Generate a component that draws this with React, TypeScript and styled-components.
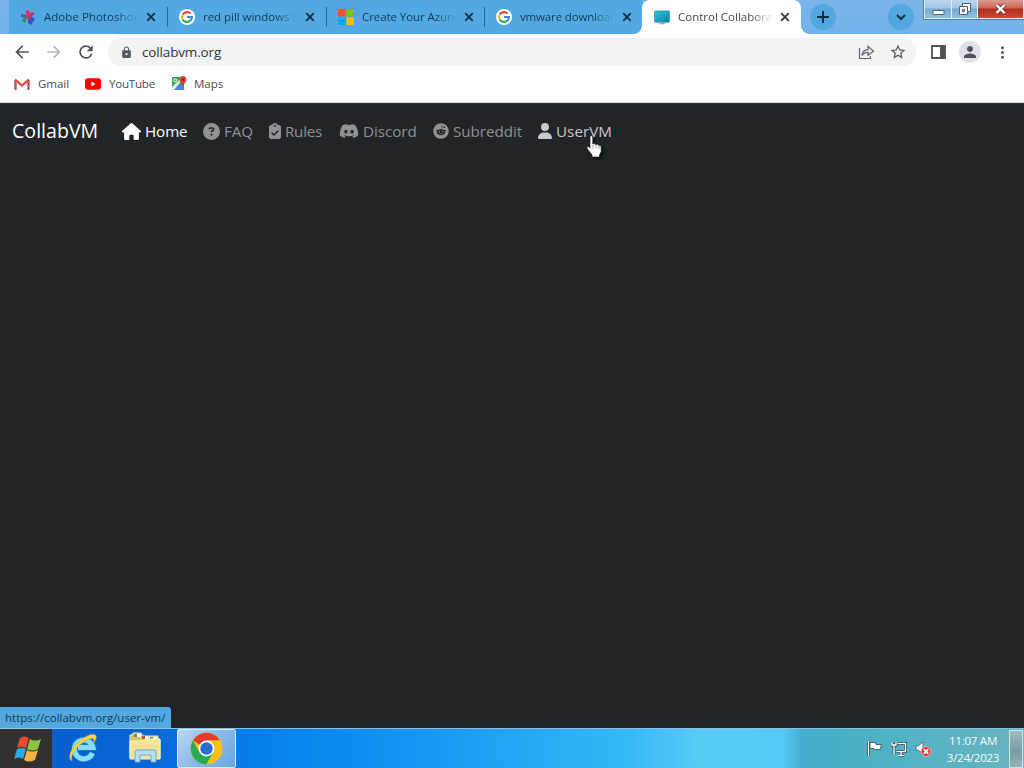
import React from "react";
import styled, { createGlobalStyle, css } from "styled-components";
import { FaHouse, FaCircleQuestion, FaClipboardCheck, FaDiscord, FaUser } from "react-icons/fa6";
import { FaReddit } from "react-icons/fa";
import { MdLock, MdPerson, MdMoreVert, MdStarBorder, MdRefresh, MdArrowBack, MdArrowForward } from "react-icons/md";

const Global = createGlobalStyle`
  * { box-sizing: border-box; }
  html, body { margin: 0; width: 1024px; height: 768px; overflow: hidden; }
  body { font-family: "Open Sans", "Noto Sans", sans-serif; }
  svg { display: block; flex: none; }
`;

const Screen = styled.div`
  width: 1024px;
  height: 768px;
  display: flex;
  flex-direction: column;
  background: #212529;
`;

/* Browser title bar */
const TabStrip = styled.header`
  height: 34px;
  display: flex;
  background: linear-gradient(#7ab4ea, #72b2e6);
  padding-left: 9px;
`;

const Tab = styled.div<{ $width: number; $active?: boolean; $last?: boolean }>`
  position: relative;
  width: ${(p) => p.$width}px;
  height: 34px;
  flex: none;
  display: flex;
  align-items: center;
  padding: 0 0 1px ${(p) => (p.$active ? 12 : 11)}px;
  color: ${(p) => (p.$active ? "#45494d" : "#103653")};
  background: ${(p) => (p.$active ? "#fff" : "#52a9e2")};
  border-radius: ${(p) => (p.$active ? "8px 8px 0 0" : p.$last ? "0 0 8px 0" : "0")};
  ${(p) =>
    p.$active &&
    css`
      &::before, &::after {
        content: "";
        position: absolute;
        bottom: 0;
        width: 8px;
        height: 8px;
      }
      &::before { left: -8px; background: radial-gradient(circle at 0 0, #52a9e2 7.5px, #fff 8px); }
      &::after { right: -8px; background: radial-gradient(circle at 100% 0, #72b2e6 7.5px, #fff 8px); }
    `}
`;

const Separator = styled.i`
  width: 1px;
  height: 20px;
  margin: 7px 0;
  background: #246a9a;
  box-shadow: 0 0 0 7px #52a9e2;
  clip-path: inset(-7px 0);
`;

const TabTitle = styled.span<{ $spacing?: number }>`
  width: 93px;
  margin-left: 8px;
  overflow: hidden;
  white-space: nowrap;
  font-size: 11.5px;
  line-height: 18px;
  letter-spacing: ${(p) => p.$spacing ?? 0}px;
  mask-image: linear-gradient(90deg, #000 72px, transparent 95px);
`;

const TabClose = styled.svg`
  margin-left: 9px;
`;

const RoundButton = styled.span<{ $gap: number }>`
  width: 26px;
  height: 26px;
  margin: 4px 0 0 ${(p) => p.$gap}px;
  border-radius: 50%;
  background: #51a8e0;
  display: flex;
  align-items: center;
  justify-content: center;
`;

const WindowControls = styled.div`
  margin-left: 10px;
  height: 19px;
  display: flex;
  border: 1px solid #e2f0fa;
  border-top: 0;
  outline: 1px solid #547ea3;
`;

const WindowButton = styled.span<{ $width: number; $close?: boolean }>`
  width: ${(p) => p.$width}px;
  display: flex;
  align-items: center;
  justify-content: center;
  border-right: ${(p) => (p.$close ? 0 : "1px solid #e2f0fa")};
  background: ${(p) =>
    p.$close
      ? "linear-gradient(#dc9b8e, #ca6355 45%, #b62b1d 50%, #c94b38)"
      : "linear-gradient(#bed8ef, #9fc4e5 45%, #75a8d2 50%, #91bfe3)"};
`;

/* Address bar and bookmarks */
const Toolbar = styled.div`
  height: 37px;
  display: flex;
  align-items: center;
  padding: 0 0 1px 12px;
  background: #fff;
  color: #55585c;
`;

const NavButton = styled.span<{ $dim?: boolean }>`
  width: 20px;
  margin-right: 12px;
  color: ${(p) => (p.$dim ? "#b5b7ba" : "#505357")};
`;

const Omnibox = styled.div`
  width: 808px;
  height: 28px;
  display: flex;
  align-items: center;
  border-radius: 14px;
  background: #f1f3f4;
  padding: 0 9px 0 12px;
`;

const Address = styled.span`
  flex: 1;
  margin-left: 9px;
  font-size: 13.5px;
  line-height: 20px;
  letter-spacing: -0.15px;
  color: #303336;
`;

const Share = styled.svg`
  margin-right: 14px;
`;

const SidePanel = styled.svg`
  margin-left: 15px;
`;

const Avatar = styled.span`
  width: 22px;
  height: 22px;
  margin: 0 12px 0 13px;
  border-radius: 50%;
  background: #dee1e8;
  color: #4a515b;
  display: flex;
  align-items: center;
  justify-content: center;
`;

const Bookmarks = styled.div`
  height: 32px;
  display: flex;
  align-items: center;
  padding: 0 0 6px 14px;
  background: #fff;
  border-bottom: 1px solid #dedfe0;
`;

const Bookmark = styled.span<{ $width: number; $gap: number; $spacing: number }>`
  width: ${(p) => p.$width}px;
  display: flex;
  align-items: center;
  gap: ${(p) => p.$gap}px;
  font-size: 11.6px;
  line-height: 18px;
  letter-spacing: ${(p) => p.$spacing}px;
  color: #4b4e52;
`;

/* Page */
const Page = styled.main`
  position: relative;
  flex: 1;
  border-top: 1px solid #302c34;
`;

const Navbar = styled.nav`
  height: 56px;
  display: flex;
  align-items: center;
  padding: 0 0 2px 12px;
`;

const Brand = styled.span`
  width: 110px;
  font-size: 19.6px;
  line-height: 28px;
  letter-spacing: 0;
  color: #fff;
`;

const NavLink = styled.a<{ $tone: string; $width: number; $spacing: number }>`
  width: ${(p) => p.$width}px;
  display: flex;
  align-items: center;
  gap: 4px;
  color: ${(p) => p.$tone};
  font-size: 15.2px;
  line-height: 24px;
  letter-spacing: ${(p) => p.$spacing}px;
  white-space: nowrap;
`;

const IconSlot = styled.span<{ $width: number }>`
  width: ${(p) => p.$width}px;
  flex: none;
  display: flex;
  justify-content: center;
`;

const Pointer = styled.svg`
  position: absolute;
  left: 586px;
  top: 31px;
  filter: drop-shadow(2px 2px 1px rgba(0, 0, 0, 0.5));
`;

const LinkStatus = styled.div`
  position: absolute;
  left: 0;
  bottom: 0;
  width: 171px;
  height: 21px;
  padding-left: 5px;
  border-radius: 0 3px 0 0;
  background: #54a8e0;
  color: #103955;
  font-size: 11.5px;
  line-height: 21px;
  letter-spacing: 0;
  white-space: nowrap;
`;

/* Taskbar */
const Taskbar = styled.footer`
  height: 40px;
  display: flex;
  border-top: 1px solid #86c1e6;
  background: linear-gradient(90deg, #0759c8 0, #0967d8 150px, #077ce9 240px, #0b8bef 340px, #189af3 440px, #28aaf5 540px, #36b8f6 630px, #58ccf6 700px, #54cbf6 782px, #45aed0 802px, #48b0c4 840px, #53b2c4 910px, #68b3bd 1024px);
`;

const TaskButton = styled.span<{ $width: number; $kind?: "start" | "active" }>`
  width: ${(p) => p.$width}px;
  height: 39px;
  display: flex;
  align-items: center;
  justify-content: center;
  padding-bottom: 2px;
  ${(p) => p.$kind === "start" && css`background: #333130; padding: 0 0 0 3px;`}
  ${(p) =>
    p.$kind === "active" &&
    css`
      padding: 0;
      border: 1px solid #d9ebfa;
      border-radius: 2px;
      background: linear-gradient(135deg, #b9d6f1, #8bbae7 50%, #67a7df);
    `}
`;

const Tray = styled.div`
  margin-left: auto;
  display: flex;
  align-items: center;
  gap: 8px;
`;

const Clock = styled.div`
  width: 62px;
  margin: 0 -3px 0 2px;
  color: #f5ffff;
  font-size: 11.6px;
  line-height: 17px;
  letter-spacing: -0.28px;
  text-align: center;
  white-space: nowrap;
`;

const ShowDesktop = styled.span`
  width: 14px;
  height: 38px;
  margin-right: 1px;
  border: 1px solid #d4e5e9;
  background: linear-gradient(#a3bcc2, #789ba3 55%, #92b2b6);
`;

const GoogleIcon = () => (
  <svg width="16" height="16" viewBox="0 0 16 16">
    <circle cx="8" cy="8" r="8" fill="#fff" />
    <g fill="none" strokeWidth="2.1">
      <path d="M11.6 4.6A5 5 0 0 0 3.7 5.5" stroke="#e94235" />
      <path d="M3.7 5.5a5 5 0 0 0 0 5" stroke="#fabb05" />
      <path d="M3.7 10.5a5 5 0 0 0 7.7 1.1" stroke="#34a853" />
      <path d="M11.4 11.6A4.8 4.8 0 0 0 13 8H8" stroke="#4285f4" />
    </g>
  </svg>
);

const PinwheelIcon = () => (
  <svg width="16" height="16" viewBox="0 0 16 16">
    <path d="M7 7 5.5 2 9 1l1.5 5z" fill="#e72e55" />
    <path d="m9 6 2.5-3L15 4l-3.5 4z" fill="#b33966" />
    <path d="m10 7 5 2.5-1.5 3L9 10z" fill="#3855cc" />
    <path d="m8 10 5 1-1 5-4-2z" fill="#4c42c5" />
    <path d="M7 9 5.5 14 2 12l2-4z" fill="#199a7c" />
    <path d="M7 9 1 8V5l6 1z" fill="#655394" />
    <circle cx="8.5" cy="8.2" r="2" fill="#c8354d" />
  </svg>
);

const MicrosoftIcon = () => (
  <svg width="16" height="16" viewBox="0 0 16 16">
    <path fill="#f35325" d="M0 0h7.5v7.5H0z" />
    <path fill="#81bc06" d="M8.5 0H16v7.5H8.5z" />
    <path fill="#05a6f0" d="M0 8.5h7.5V16H0z" />
    <path fill="#ffba08" d="M8.5 8.5H16V16H8.5z" />
  </svg>
);

const MonitorIcon = () => (
  <svg width="16" height="16" viewBox="0 0 17 16">
    <defs>
      <linearGradient id="monitor" x2="1" y2="1">
        <stop stopColor="#35c8dd" />
        <stop offset="1" stopColor="#087da7" />
      </linearGradient>
    </defs>
    <rect x=".5" y="1.5" width="16" height="12" rx="1" fill="url(#monitor)" stroke="#168ba8" strokeWidth=".7" />
    <path d="M8.3 13.5V15M5 15.2h7" stroke="#8c989e" strokeWidth="1.2" />
  </svg>
);

const CloseMark = ({ active }: { active?: boolean }) => (
  <TabClose width="10" height="10" viewBox="0 0 10 10">
    <path d="m1.2 1.2 7.6 7.6m0-7.6L1.2 8.8" stroke={active ? "#34383c" : "#102d43"} strokeWidth="1.8" />
  </TabClose>
);

const tabs = [
  { title: "Adobe Photoshop", width: 158, icon: <PinwheelIcon />, spacing: 0.03 },
  { title: "red pill windows 8", width: 158, icon: <GoogleIcon />, spacing: -0.04 },
  { title: "Create Your Azure", width: 157, icon: <MicrosoftIcon />, spacing: -0.07 },
  { title: "vmware download", width: 157, icon: <GoogleIcon />, spacing: -0.15 },
];

const links = [
  { label: "Home", icon: <FaHouse size={19} />, slot: 19, tone: "#fff", width: 81, spacing: -0.1 },
  { label: "FAQ", icon: <FaCircleQuestion size={17} />, slot: 17, tone: "#909294", width: 65, spacing: -0.1 },
  { label: "Rules", icon: <FaClipboardCheck size={16} />, slot: 13, tone: "#909294", width: 71, spacing: -0.25 },
  { label: "Discord", icon: <FaDiscord size={20} />, slot: 20, tone: "#909294", width: 94, spacing: -0.05 },
  { label: "Subreddit", icon: <FaReddit size={16} />, slot: 16, tone: "#909294", width: 104, spacing: -0.05 },
  { label: "UserVM", icon: <FaUser size={16} />, slot: 15, tone: "#c8c9ca", width: 76, spacing: 0.05 },
];

const StartLogo = () => (
  <svg width="28" height="26" viewBox="0 0 28 26">
    <path d="M6 2q4-3 9 0l-3 10q-5-2-9 0z" fill="#e64a32" />
    <path d="M16 3q5 3 11 0l-3 10q-6 3-11 0z" fill="#8ac443" />
    <path d="M3 13q5-2 9 0L9 23q-4-3-9 0z" fill="#2baadf" />
    <path d="M13 14q5 3 11 0l-3 10q-6 3-11 0z" fill="#f5b342" />
  </svg>
);

const ExplorerLogo = () => (
  <svg width="30" height="30" viewBox="0 0 30 30">
    <path d="M24.5 20a9.4 9.4 0 1 1 .5-5.5H10" fill="none" stroke="#1984cd" strokeWidth="6.4" />
    <path d="M24.5 20a9.4 9.4 0 1 1 .5-5.5H10" fill="none" stroke="#8adcfa" strokeWidth="5" />
    <path d="M4 28C-2 25 4 13 14 6c7-5 13-6 14-3 1 2-1 5-2 7 1-5-2-6-9-2C8 14 2 22 4 28z" fill="#f5d54a" stroke="#bca63d" strokeWidth=".6" />
  </svg>
);

const FolderLogo = () => (
  <svg width="34" height="31" viewBox="0 0 34 31">
    <path d="M2 26V3h2l1-2h8l2 3h15v4h2v18z" fill="#dfc567" stroke="#f5e8a8" />
    <path d="M7 2h6v3H7z" fill="#fff" /><path d="M6 2h3v3H6z" fill="#42a358" />
    <path d="M14 4h6v3h-6z" fill="#fff" /><path d="M14 4h3v3h-3z" fill="#d84b38" />
    <path d="M21 5h8v3h-8z" fill="#fff" /><path d="M22 5h3v2h-3z" fill="#2f92ce" />
    <path d="M2 9h13l2-2h15v20H2z" fill="#f5e39a" stroke="#fff4bf" />
    <path d="M3 14h28M3 18h28" stroke="#eed98c" />
    <path d="M7 30V20q0-2 2-2h17q2 0 2 2v10h-5v-7H12v7z" fill="#b9ddf3" stroke="#6babd1" />
  </svg>
);

const ChromeLogo = () => (
  <svg width="33" height="33" viewBox="0 0 48 48">
    <circle cx="24" cy="24" r="23" fill="#fbc116" />
    <path d="M24 24 4.1 12.5A23 23 0 0 1 43.9 12.5H24z" fill="#e33b2e" />
    <path d="M4.1 12.5A23 23 0 0 0 24 47l10-17.3L24 24l-10 5.8z" fill="#2da94f" />
    <path d="M24 12.5h19.9A23 23 0 0 1 24 47l10-17.3z" fill="#fbc116" />
    <circle cx="24" cy="24" r="11.5" fill="#fff" />
    <circle cx="24" cy="24" r="9" fill="#286bd2" />
  </svg>
);

export default function App() {
  return (
    <>
      <Global />
      <Screen>
        <TabStrip>
          {tabs.map((tab, i) => (
            <React.Fragment key={tab.title}>
              <Tab $width={tab.width} $last={i === 3}>
                {tab.icon}
                <TabTitle $spacing={tab.spacing}>{tab.title}</TabTitle>
                <CloseMark />
              </Tab>
              {i < 3 && <Separator />}
            </React.Fragment>
          ))}
          <Tab $width={159} $active>
            <MonitorIcon />
            <TabTitle>Control Collabora</TabTitle>
            <CloseMark active />
          </Tab>
          <RoundButton $gap={9}>
            <svg width="12" height="12" viewBox="0 0 12 12"><path d="M6 0v12M0 6h12" stroke="#0d2b40" strokeWidth="2" /></svg>
          </RoundButton>
          <RoundButton $gap={52}>
            <svg width="10" height="7" viewBox="0 0 10 7"><path d="m1 1 4 4 4-4" fill="none" stroke="#0d2b40" strokeWidth="2" /></svg>
          </RoundButton>
          <WindowControls>
            <WindowButton $width={27}>
              <svg width="13" height="14" viewBox="0 0 13 14"><rect x="1" y="8.5" width="11" height="4" rx=".5" fill="#fff" stroke="#53636f" /></svg>
            </WindowButton>
            <WindowButton $width={26}>
              <svg width="14" height="14" viewBox="0 0 14 14">
                <path d="M4.5 1.5h8v8h-8z" fill="#fff" stroke="#496274" />
                <path d="M1.5 4.5h8v8h-8z" fill="#fff" stroke="#496274" />
                <path d="M4.5 7.5h2v2h-2z" fill="#8cb9de" stroke="#496274" />
              </svg>
            </WindowButton>
            <WindowButton $width={45} $close>
              <svg width="13" height="12" viewBox="0 0 13 12">
                <path d="m2.5 2 8 8m0-8-8 8" stroke="#67423e" strokeWidth="4" />
                <path d="m2.5 2 8 8m0-8-8 8" stroke="#fff" strokeWidth="2.4" />
              </svg>
            </WindowButton>
          </WindowControls>
        </TabStrip>

        <Toolbar>
          <NavButton><MdArrowBack size={20} /></NavButton>
          <NavButton $dim><MdArrowForward size={20} /></NavButton>
          <NavButton><MdRefresh size={20} /></NavButton>
          <Omnibox>
            <MdLock size={13} />
            <Address>collabvm.org</Address>
            <Share width="17" height="15" viewBox="0 0 17 15" fill="none" stroke="#606368" strokeWidth="1.2">
              <path d="M1.5 3v10.5h11V11" />
              <path d="M4 10.5C4.3 6.5 6.8 4.7 10 4.6V1.4l5.5 4.8-5.5 4V7.3C7.4 7.3 5.6 8 4 10.5z" />
            </Share>
            <MdStarBorder size={18} />
          </Omnibox>
          <SidePanel width="15" height="14" viewBox="0 0 15 14"><path d="M1 1h13v12H1z" fill="none" stroke="#505357" strokeWidth="1.8" /><path d="M9 1h5v12H9z" fill="#505357" /></SidePanel>
          <Avatar><MdPerson size={18} /></Avatar>
          <MdMoreVert size={19} />
        </Toolbar>

        <Bookmarks>
          <Bookmark $width={71} $gap={8} $spacing={-0.1}>
            <svg width="16" height="12" viewBox="0 0 16 12">
              <path d="M1.5 12V2" stroke="#b15b68" strokeWidth="2.4" />
              <path d="M14.5 12V2" stroke="#b15b68" strokeWidth="2.4" />
              <path d="m1 1.5 7 6 7-6" fill="none" stroke="#e44639" strokeWidth="2.3" />
            </svg>
            Gmail
          </Bookmark>
          <Bookmark $width={86} $gap={8} $spacing={-0.25}>
            <svg width="16" height="12" viewBox="0 0 17 12"><rect width="17" height="12" rx="3" fill="#f00" /><path d="m6.7 3.4 4.6 2.6-4.6 2.6z" fill="#fff" /></svg>
            YouTube
          </Bookmark>
          <Bookmark $width={60} $gap={7} $spacing={-0.1}>
            <svg width="16" height="15" viewBox="0 0 16 15">
              <rect x="1" y="1" width="12" height="13" rx="1" fill="#37a65b" />
              <path d="m2 14 6-7 6 7z" fill="#4c86e7" />
              <path d="M1 11 10 2h3L3 14H1z" fill="#e4e9e5" />
              <circle cx="4.2" cy="4.3" r="1.5" fill="none" stroke="#fff" />
              <path d="M12 0a3.6 3.6 0 0 1 3.5 4c0 2.5-2.8 3.2-3.5 7-.7-3.8-3.5-4.5-3.5-7A3.6 3.6 0 0 1 12 0z" fill="#d84437" />
              <circle cx="12" cy="3.8" r="1.2" fill="#7d201c" />
            </svg>
            Maps
          </Bookmark>
        </Bookmarks>

        <Page>
          <Navbar>
            <Brand>CollabVM</Brand>
            {links.map((link) => (
              <NavLink key={link.label} $tone={link.tone} $width={link.width} $spacing={link.spacing}>
                <IconSlot $width={link.slot}>{link.icon}</IconSlot>
                {link.label}
              </NavLink>
            ))}
          </Navbar>
          <Pointer width="19" height="24" viewBox="0 0 19 24">
            <path d="M4 2q0-1.5 1.3-1.5T6.8 2v7q2-1 3 .5 2-.7 3 .8 2-.4 2.4 1.5v5L13.5 20v2H6v-2l-4.7-6q-1-1.7.3-2.3 1-.4 2.4 1.2z" fill="#fff" stroke="#15181b" strokeWidth=".7" />
            <path d="M7 10v4m3-4v4m3-3v3" stroke="#89909a" strokeWidth=".8" />
          </Pointer>
          <LinkStatus>https://collabvm.org/user-vm/</LinkStatus>
        </Page>

        <Taskbar>
          <TaskButton $width={52} $kind="start"><StartLogo /></TaskButton>
          <TaskButton $width={61}><ExplorerLogo /></TaskButton>
          <TaskButton $width={64}><FolderLogo /></TaskButton>
          <TaskButton $width={59} $kind="active"><ChromeLogo /></TaskButton>
          <Tray>
            <svg width="17" height="17" viewBox="0 0 17 17">
              <path d="M2.5 1v15" stroke="#173e4a" strokeWidth="3" /><path d="M2.5 1v15" stroke="#fff" strokeWidth="1.5" />
              <path d="M4 2.5h5l1 2h5.5L14 9.5H9l-1-1H4z" fill="#fff" stroke="#24505c" strokeWidth=".8" />
            </svg>
            <svg width="16" height="16" viewBox="0 0 16 16" fill="none">
              <path d="M6.5 2.5h8v8h-9M10 11v3M7 14.5h6M1 1v3h4V1M3 4v10" stroke="#173e4a" strokeWidth="2.8" />
              <path d="M6.5 2.5h8v8h-9M10 11v3M7 14.5h6M1 1v3h4V1M3 4v10" stroke="#fff" strokeWidth="1.4" />
            </svg>
            <svg width="17" height="17" viewBox="0 0 17 17">
              <path d="M1 6h2l5-4v12l-5-4H1z" fill="#fff" stroke="#31515a" strokeWidth=".7" />
              <circle cx="11" cy="11.5" r="5" fill="#d83936" stroke="#efb6ae" />
              <path d="m8.7 9.2 4.6 4.6m0-4.6-4.6 4.6" stroke="#fff" strokeWidth="1.8" />
            </svg>
            <Clock>11:07 AM<br />3/24/2023</Clock>
            <ShowDesktop />
          </Tray>
        </Taskbar>
      </Screen>
    </>
  );
}
